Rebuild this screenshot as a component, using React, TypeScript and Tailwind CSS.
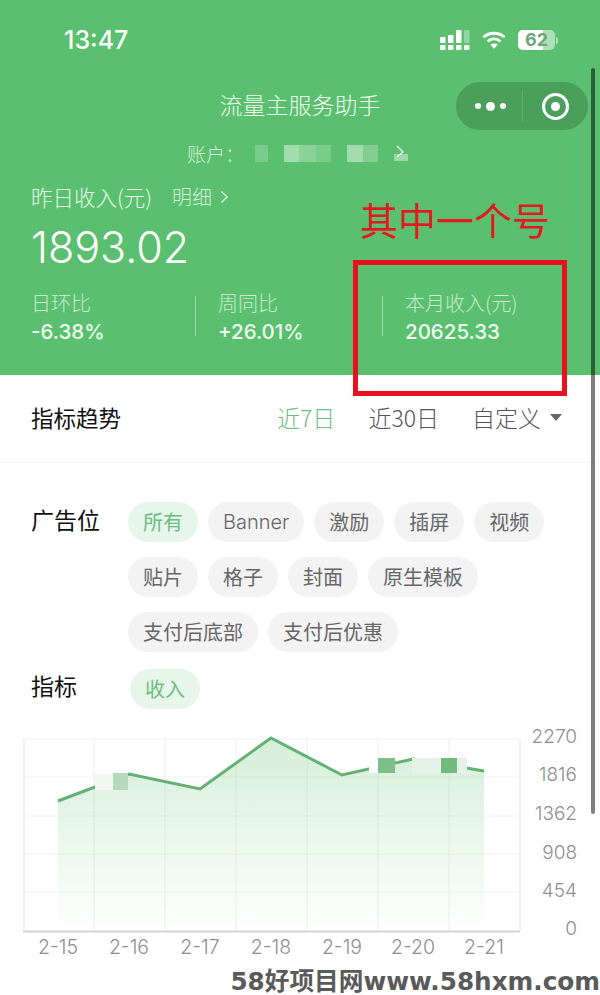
import React from 'react';

const row1 = ['所有', 'Banner', '激励', '插屏', '视频'];
const row2 = ['贴片', '格子', '封面', '原生模板'];
const row3 = ['支付后底部', '支付后优惠'];

const stats = [
  { label: '日环比', value: '-6.38%' },
  { label: '周同比', value: '+26.01%' },
  { label: '本月收入(元)', value: '20625.33' },
];

const yLabels = ['2270', '1816', '1362', '908', '454', '0'];
const xLabels = ['2-15', '2-16', '2-17', '2-18', '2-19', '2-20', '2-21'];
const points = [
  [58, 802],
  [129, 775],
  [200, 790],
  [271, 739],
  [342, 776],
  [413, 760],
  [484, 772],
];

function Chip({ text, active }: { text: string; active?: boolean }) {
  return (
    <div
      className={
        'h-10 px-[15px] rounded-[20px] flex items-center text-[20px] leading-none ' +
        (active ? 'bg-[#e6f6ea] text-[#6dbd80]' : 'bg-[#f3f3f3] text-[#666666]')
      }
    >
      {text === 'Banner' ? <span className="font-[family-name:Inter] font-light">{text}</span> : text}
    </div>
  );
}

function StatusIcons() {
  return (
    <div className="flex items-center">
      <svg width="30" height="20" viewBox="0 0 30 20">
        <g fill="#ffffff">
          <rect x="0" y="7" width="5.5" height="6" rx="1" />
          <rect x="0" y="15" width="5.5" height="5" rx="1" />
          <rect x="8" y="5" width="5.5" height="8" rx="1" />
          <rect x="8" y="15" width="5.5" height="5" rx="1" />
          <rect x="16" y="0" width="5.5" height="13" rx="1" />
          <rect x="16" y="15" width="5.5" height="5" rx="1" />
          <rect x="24" y="15" width="5.5" height="5" rx="1" />
        </g>
        <rect x="24" y="0" width="5.5" height="13" rx="1" fill="#ffffff" fillOpacity="0.35" />
      </svg>
      <svg width="24" height="18" viewBox="0 0 25 18" fill="none" stroke="#ffffff" strokeWidth="3" className="ml-[12px]">
        <path d="M1.5 6.2C7.6 0.6 17.4 0.6 23.5 6.2" />
        <path d="M5.8 10.5C9.5 7 15.5 7 19.2 10.5" />
        <path d="M12.5 18L8.6 13.8C10.9 12.2 14.1 12.2 16.4 13.8Z" fill="#ffffff" stroke="none" />
      </svg>
      <div className="flex items-center ml-[12px]">
        <div className="relative w-[37px] h-[20px] rounded-[5px] bg-white/50 overflow-hidden">
          <div className="w-[25px] h-full bg-white" />
          <div className="absolute inset-0 flex items-center justify-center text-[18px] font-bold text-[#6da67b] leading-none font-[family-name:Inter]">
            62
          </div>
        </div>
        <div className="w-[2px] h-[7px] bg-white/50 rounded-r ml-[1px]" />
      </div>
    </div>
  );
}

function Chart() {
  const line = points.map((p) => p.join(',')).join(' ');
  const area = `58,932 ${line} 484,932`;
  return (
    <svg width="600" height="235" viewBox="0 730 600 235" className="block mt-[20px]">
      <defs>
        <linearGradient id="areaFill" x1="0" y1="739" x2="0" y2="932" gradientUnits="userSpaceOnUse">
          <stop offset="0" stopColor="#5abf6e" stopOpacity="0.26" />
          <stop offset="1" stopColor="#5abf6e" stopOpacity="0" />
        </linearGradient>
      </defs>
      {[740, 778, 817, 855, 893].map((y) => (
        <line key={y} x1="23" x2="520" y1={y} y2={y} stroke="#f2f2f2" strokeWidth="1" />
      ))}
      {[24, 94, 165, 236, 307, 378, 449, 520].map((x) => (
        <line key={x} x1={x} x2={x} y1="740" y2="932" stroke={x === 24 || x === 520 ? '#e4e4e4' : '#eeeeee'} strokeWidth="1" />
      ))}
      <line x1="23" x2="520" y1="932.5" y2="932.5" stroke="#d4d4d4" strokeWidth="2" />
      <polygon points={area} fill="url(#areaFill)" />
      <polyline points={line} fill="none" stroke="#63b173" strokeWidth="3" />
      {/* mosaic patches over the tooltip */}
      <rect x="95" y="775" width="18" height="16" fill="#f4f6f4" />
      <rect x="113" y="774" width="15" height="17" fill="#b4d9bb" />
      <rect x="369" y="758" width="9" height="16" fill="#ffffff" />
      <rect x="378" y="759" width="17" height="15" fill="#7dbf88" />
      <rect x="412" y="759" width="30" height="15" fill="#e6f2e8" />
      <rect x="441" y="759" width="16" height="15" fill="#72b97e" />
      <rect x="457" y="759" width="10" height="15" fill="#e6f2e8" />
      <g fontSize="19" fill="#8f8f8f" fontFamily="Inter, sans-serif" fontWeight="300" textAnchor="end">
        {yLabels.map((t, i) => (
          <text key={t} x="577" y={[744, 782, 821, 860, 898, 936][i]}>
            {t}
          </text>
        ))}
      </g>
      <g fontSize="19.5" fill="#8f8f8f" fontFamily="Inter, sans-serif" fontWeight="300" textAnchor="middle">
        {xLabels.map((t, i) => (
          <text key={t} x={points[i][0]} y="955">
            {t}
          </text>
        ))}
      </g>
    </svg>
  );
}

export default function App() {
  return (
    <div className="relative w-[600px] h-[995px] overflow-hidden bg-white font-[family-name:'Noto_Sans_CJK_SC',sans-serif]">
      {/* green header */}
      <div className="h-[375px] bg-[#5abf6e] text-white">
        <div className="flex justify-between items-center pl-[64px] pr-[42px] pt-[27px] h-[53px]">
          <span className="text-[25px] font-medium leading-none font-[family-name:Inter]">13:47</span>
          <StatusIcons />
        </div>

        <div className="relative flex justify-center items-center h-[48px] mt-[29px]">
          <span className="text-[23px] font-light leading-none text-white/90 pb-[4px]">流量主服务助手</span>
          <div className="absolute right-[12px] top-0 w-[132px] h-[48px] rounded-[24px] bg-[#4a9f5b] flex items-center">
            <div className="w-[66px] flex items-center justify-center gap-[5px] pl-[2px]">
              <span className="w-[6px] h-[6px] rounded-full bg-white" />
              <span className="w-[9px] h-[9px] rounded-full bg-white" />
              <span className="w-[6px] h-[6px] rounded-full bg-white" />
            </div>
            <div className="w-px h-[30px] bg-white/15" />
            <div className="flex-1 flex justify-center">
              <div className="w-[27px] h-[27px] rounded-full border-[3px] border-white flex items-center justify-center">
                <div className="w-[9px] h-[9px] rounded-full bg-white" />
              </div>
            </div>
          </div>
        </div>

        <div className="flex items-center h-[26px] mt-[10px] pl-[187px] text-[19px] font-light text-white/75 leading-none">
          <span>账户：</span>
          <div className="flex items-center h-[17px] ml-[11px]">
            <div className="w-[13px] h-full bg-white/20" />
            <div className="w-[16px]" />
            <div className="w-[15px] h-full bg-white/45" />
            <div className="w-[17px] h-full bg-white/30" />
            <div className="w-[15px] h-full bg-white/20" />
            <div className="w-[16px]" />
            <div className="w-[16px] h-full bg-white/45" />
            <div className="w-[15px] h-full bg-white/25" />
          </div>
          <svg width="14" height="16" viewBox="0 0 14 16" className="ml-[16px]">
            <path d="M3 1l6 6-6 5" fill="none" stroke="#ffffff" strokeOpacity="0.8" strokeWidth="1.5" />
            <rect x="0" y="9" width="14" height="7" fill="#ffffff" fillOpacity="0.4" />
          </svg>
        </div>

        <div className="flex items-center h-[28px] mt-[17px] pl-[31px] leading-none">
          <span className="text-[21.5px] font-light text-white/85">昨日收入(元)</span>
          <span className="text-[20px] font-light text-white/75 ml-[20px]">明细</span>
          <svg width="9" height="14" viewBox="0 0 9 14" className="ml-[8px]">
            <path d="M1.5 1.5L7 7l-5.5 5.5" fill="none" stroke="#ffffff" strokeOpacity="0.8" strokeWidth="1.4" />
          </svg>
        </div>

        <div className="pl-[31px] mt-[11px] text-[43px] leading-[50px] font-light font-[family-name:Inter]">1893.02</div>

        <div className="flex pl-[31px] mt-[18px]">
          {stats.map((s, i) => (
            <div
              key={s.label}
              className={
                'flex flex-col ' +
                (i === 0 ? 'w-[164px]' : i === 1 ? 'w-[187px] pl-[23px] relative' : 'pl-[23px] relative')
              }
            >
              {i > 0 && <div className="absolute left-0 top-[6px] w-px h-[40px] bg-white/40" />}
              <span className="text-[20px] font-light text-white/65 leading-[26px]">{s.label}</span>
              <span className="text-[20.5px] font-medium text-white/90 leading-[26px] mt-[3px] font-[family-name:Inter]">
                {s.value}
              </span>
            </div>
          ))}
        </div>
      </div>

      {/* trend tabs */}
      <div className="h-[88px] flex items-center justify-between pl-[31px] pr-[38px] pb-[3px] border-b border-[#f5f5f5]">
        <span className="text-[22.5px] text-[#111111] leading-none">指标趋势</span>
        <div className="flex items-center text-[23px] font-light leading-none">
          <span className="text-[#6dbd80]">近7日</span>
          <span className="text-[#555555] ml-[33px]">近30日</span>
          <span className="text-[#555555] ml-[33px]">自定义</span>
          <span className="ml-[9px] w-0 h-0 border-x-[6px] border-x-transparent border-t-[7px] border-t-[#666666]" />
        </div>
      </div>

      {/* filters */}
      <div className="flex pl-[31px] pt-[39px]">
        <span className="w-[97px] text-[23px] text-[#111111] leading-[34px]">广告位</span>
        <div className="flex flex-col gap-[15px]">
          <div className="flex gap-[10px]">
            {row1.map((t, i) => (
              <Chip key={t} text={t} active={i === 0} />
            ))}
          </div>
          <div className="flex gap-[10px]">
            {row2.map((t) => (
              <Chip key={t} text={t} />
            ))}
          </div>
          <div className="flex gap-[10px]">
            {row3.map((t) => (
              <Chip key={t} text={t} />
            ))}
          </div>
        </div>
      </div>

      <div className="flex pl-[31px] pt-[17px]">
        <span className="w-[99px] text-[23px] text-[#111111] leading-[32px]">指标</span>
        <Chip text="收入" active />
      </div>

      <Chart />

      {/* thin scrollbar */}
      <div className="absolute left-[591px] top-[68px] w-[4px] h-[746px] rounded-full bg-black/50" />

      {/* red annotation */}
      <div className="absolute left-[360px] top-[194px] text-[38px] leading-[50px] text-[#e11a22] whitespace-nowrap">其中一个号</div>
      <div className="absolute left-[353px] top-[260px] w-[214px] h-[136px] border-[5px] border-[#e8101f]" />

      {/* site watermark */}
      <div className="absolute right-0 top-[966px] text-[24.7px] leading-[32px] font-bold text-[#5a5a5a] whitespace-nowrap font-[family-name:'DejaVu_Sans','Noto_Sans_CJK_SC',sans-serif]">
        58好项目网www.58hxm.com
      </div>
    </div>
  );
}
